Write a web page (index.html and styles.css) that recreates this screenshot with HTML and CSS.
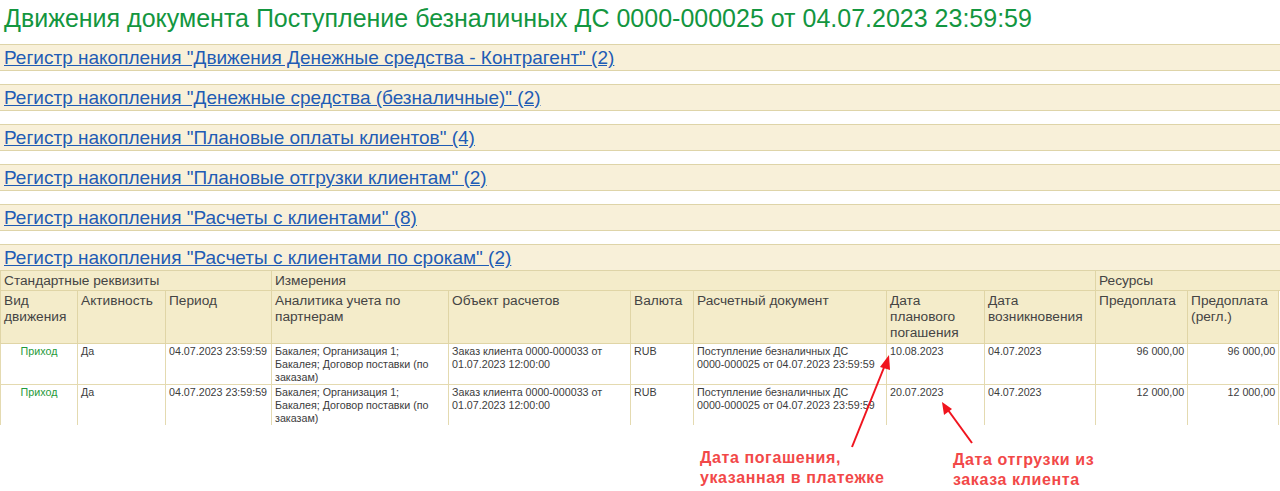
FILE: index.html
```html
<!DOCTYPE html>
<html lang="ru">
<head>
    <meta charset="UTF-8">
    <title>Движения документа</title>
    <link rel="stylesheet" href="styles.css">
</head>
<body>
    <h1 class="title">Движения документа Поступление безналичных ДС 0000-000025 от 04.07.2023 23:59:59</h1>

    <div class="register"><a href="#">Регистр накопления "Движения Денежные средства - Контрагент" (2)</a></div>
    <div class="register"><a href="#">Регистр накопления "Денежные средства (безналичные)" (2)</a></div>
    <div class="register"><a href="#">Регистр накопления "Плановые оплаты клиентов" (4)</a></div>
    <div class="register"><a href="#">Регистр накопления "Плановые отгрузки клиентам" (2)</a></div>
    <div class="register"><a href="#">Регистр накопления "Расчеты с клиентами" (8)</a></div>
    <div class="register last"><a href="#">Регистр накопления "Расчеты с клиентами по срокам" (2)</a></div>

    <div class="movements">
        <table class="grid">
            <colgroup>
                <col style="width:77px"><col style="width:88px"><col style="width:106px">
                <col style="width:177px"><col style="width:182px"><col style="width:63px">
                <col style="width:193px"><col style="width:98px"><col style="width:111px">
                <col style="width:92px"><col style="width:91px"><col>
            </colgroup>
            <thead>
                <tr class="group">
                    <th colspan="3">Стандартные реквизиты</th>
                    <th colspan="6">Измерения</th>
                    <th colspan="3">Ресурсы</th>
                </tr>
                <tr class="fields">
                    <th>Вид движения</th>
                    <th>Активность</th>
                    <th>Период</th>
                    <th>Аналитика учета по партнерам</th>
                    <th>Объект расчетов</th>
                    <th>Валюта</th>
                    <th>Расчетный документ</th>
                    <th>Дата планового погашения</th>
                    <th>Дата возникновения</th>
                    <th>Предоплата</th>
                    <th>Предоплата (регл.)</th>
                    <th class="tail"></th>
                </tr>
            </thead>
            <tbody>
                <tr>
                    <td class="kind">Приход</td>
                    <td>Да</td>
                    <td class="nowrap">04.07.2023 23:59:59</td>
                    <td>Бакалея; Организация 1; Бакалея; Договор поставки (по заказам)</td>
                    <td>Заказ клиента 0000-000033 от 01.07.2023 12:00:00</td>
                    <td>RUB</td>
                    <td>Поступление безналичных ДС <span class="nowrap">0000-000025</span> от 04.07.2023 23:59:59</td>
                    <td>10.08.2023</td>
                    <td>04.07.2023</td>
                    <td class="num">96 000,00</td>
                    <td class="num">96 000,00</td>
                    <td class="tail"></td>
                </tr>
                <tr>
                    <td class="kind">Приход</td>
                    <td>Да</td>
                    <td class="nowrap">04.07.2023 23:59:59</td>
                    <td>Бакалея; Организация 1; Бакалея; Договор поставки (по заказам)</td>
                    <td>Заказ клиента 0000-000033 от 01.07.2023 12:00:00</td>
                    <td>RUB</td>
                    <td>Поступление безналичных ДС <span class="nowrap">0000-000025</span> от 04.07.2023 23:59:59</td>
                    <td>20.07.2023</td>
                    <td>04.07.2023</td>
                    <td class="num">12 000,00</td>
                    <td class="num">12 000,00</td>
                    <td class="tail"></td>
                </tr>
            </tbody>
        </table>

        <svg class="arrows" width="1280" height="491" viewBox="0 0 1280 491">
            <g stroke="#f0141e" stroke-width="2" fill="#f0141e">
                <line x1="852" y1="446" x2="885" y2="364"/>
                <polygon points="889,354 880,366 890,369" stroke="none"/>
                <line x1="972" y1="442" x2="948" y2="409"/>
                <polygon points="942,401 944,414 952,408" stroke="none"/>
            </g>
        </svg>
        <div class="note note-pay">Дата погашения,<br>указанная в платежке</div>
        <div class="note note-ship">Дата отгрузки из<br>заказа клиента</div>
    </div>
</body>
</html>
```

FILE: styles.css
```css
body {
    margin: 0;
    background: #fff;
    font-family: "Liberation Sans", Arial, sans-serif;
    height: 491px;
    overflow: hidden;
}

.title {
    margin: 0;
    padding: 4px 0 0 4px;
    height: 40px;
    font-size: 25px;
    font-weight: normal;
    line-height: 28px;
    color: #13963f;
    white-space: nowrap;
}

.register {
    height: 25px;
    margin-bottom: 13px;
    padding-left: 4px;
    background: #f8f0d9;
    border-top: 1px solid #ded4a8;
    border-bottom: 1px solid #ded4a8;
    line-height: 26px;
    white-space: nowrap;
}
.register.last {
    margin-bottom: 0;
}
.register a {
    font-size: 19px;
    color: #1f5cb5;
    text-decoration: underline;
}

.movements {
    position: relative;
}

.grid {
    border-collapse: collapse;
    table-layout: fixed;
    width: 1280px;
}
.grid th {
    background: #f4ecca;
    font-weight: normal;
    font-size: 13.7px;
    line-height: 16px;
    color: #444;
    text-align: left;
    vertical-align: top;
    padding: 2px 3px 0 3px;
    border: 1px solid #e0d5a6;
}
.grid tr.group th {
    height: 17px;
    border-top: none;
}
.grid tr.fields th {
    height: 50px;
}
.grid th.tail, .grid td.tail {
    border: none;
    background: #fff;
}
.grid tr.group th:last-child {
    border-right: none;
}
.grid td {
    font-size: 10.7px;
    line-height: 13px;
    color: #3c3c3c;
    vertical-align: top;
    padding: 1px 3px 0 3px;
    height: 39px;
    border-left: 1px solid #e4dab0;
    border-right: 1px solid #e4dab0;
    border-bottom: 1px solid #e4dab0;
}
.grid tbody tr:last-child td {
    border-bottom: none;
}
.grid .nowrap {
    white-space: nowrap;
}
.grid td.kind {
    color: #1f9a3b;
    text-align: center;
}
.grid td.num {
    text-align: right;
}

.arrows {
    position: absolute;
    left: 0;
    top: -270px;
    pointer-events: none;
}

.note {
    position: absolute;
    font-size: 16px;
    font-weight: bold;
    line-height: 20px;
    letter-spacing: 0.6px;
    color: #f24848;
    white-space: nowrap;
}
.note-pay {
    left: 700px;
    top: 177px;
}
.note-ship {
    left: 953px;
    top: 179px;
}
```
